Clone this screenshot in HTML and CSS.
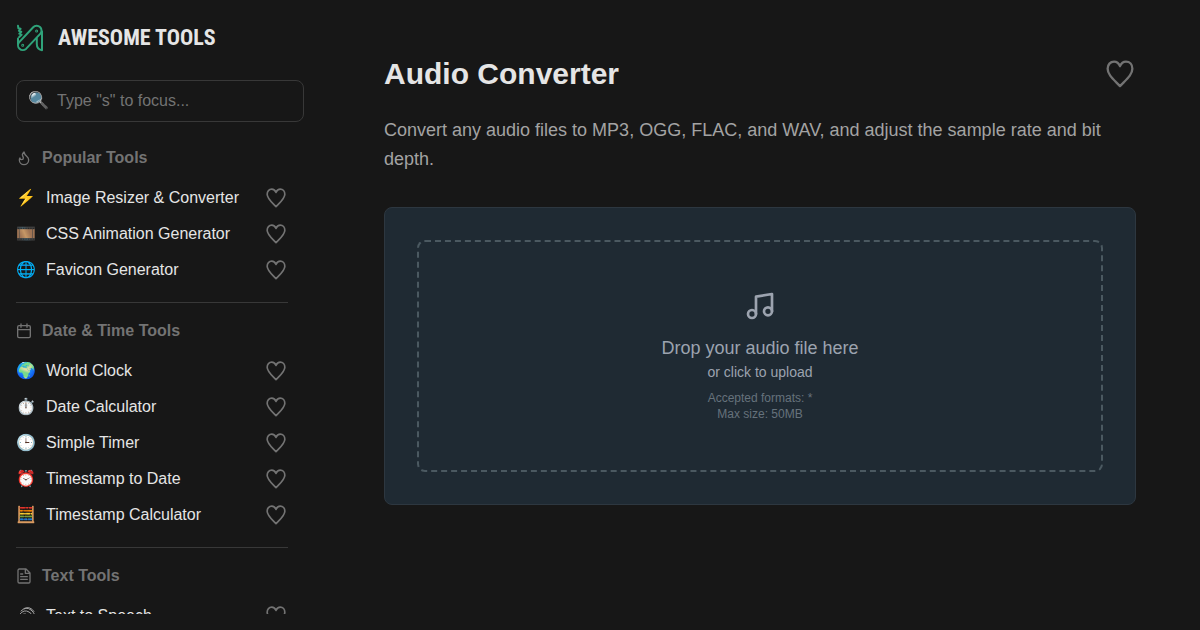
FILE: index.html
```html
<!DOCTYPE html>
<html lang="en">
<head>
    <meta charset="UTF-8">
    <meta name="viewport" content="width=device-width, initial-scale=1.0">
    <title>Audio Converter - Awesome Tools</title>
    <link rel="stylesheet" href="styles.css">
</head>
<body>
    <!-- Shared icons -->
    <svg class="sprite" aria-hidden="true">
        <symbol id="heart" viewBox="0 0 24 24">
            <path d="M12 5.3C10.9 2.6 9.3 1.4 6.9 1.4C3.7 1.4 1.4 3.900 1.400 7.500C1.400 12.600 6.400 16.500 12 22.400C17.600 16.500 22.600 12.600 22.600 7.500C22.600 3.900 20.300 1.400 17.100 1.400C14.700 1.400 13.100 2.600 12 5.300Z"/>
        </symbol>
    </svg>

    <div class="layout">
        <aside class="sidebar">
            <a class="logo" href="index.html">
                <svg class="logo-icon" viewBox="0 0 28 28" aria-hidden="true">
                    <path d="M3 18.4L17.2 3.300a4.800 4.800 0 0 1 7 6.600L10 24.900a4.800 4.800 0 0 1-7-6.500z"/>
                    <path d="M26 7.500v18.800c-3.200-.7-5.200-3.200-5.200-6.300v-5.500"/>
                    <path d="M2 1.800l.4 2.500 2.200.5-1.700 2 2.400.9-2 2 2.300 1-2.400 2.300M2 20v-5.500"/>
                    <circle cx="6.700" cy="21.300" r=".5"/>
                    <circle cx="20.600" cy="6.900" r=".5"/>
                </svg>
                <span class="logo-text">AWESOME TOOLS</span>
            </a>

            <label class="search">
                <span class="search-icon" aria-hidden="true">🔍</span>
                <input type="search" placeholder='Type "s" to focus...' aria-label="Search tools">
            </label>

            <nav class="menu">
                <section class="group">
                    <h2><svg viewBox="0 0 24 24"><path d="M8.5 14.5A2.5 2.5 0 0 0 11 12c0-1.4-.5-2-1-3-1.1-2.1-.2-4 2-6 .5 2.5 2 4.900 4 6.500 2 1.600 3 3.500 3 5.500a7 7 0 1 1-14 0c0-1.200.4-2.300 1-3a2.500 2.500 0 0 0 2.500 2.500z"/></svg>Popular Tools</h2>
                    <ul>
                        <li><a href="#image"><span class="emoji">⚡</span>Image Resizer &amp; Converter</a><button class="fav" aria-label="Favorite Image Resizer"><svg><use href="#heart"/></svg></button></li>
                        <li><a href="#css"><span class="emoji">🎞️</span>CSS Animation Generator</a><button class="fav" aria-label="Favorite CSS Animation Generator"><svg><use href="#heart"/></svg></button></li>
                        <li><a href="#favicon"><span class="emoji">🌐</span>Favicon Generator</a><button class="fav" aria-label="Favorite Favicon Generator"><svg><use href="#heart"/></svg></button></li>
                    </ul>
                </section>
                <section class="group">
                    <h2><svg viewBox="0 0 24 24"><rect x="2.500" y="4" width="19" height="18" rx="2"/><path d="M7.500 1.500v5M16.500 1.500v5M2.500 10h19"/></svg>Date &amp; Time Tools</h2>
                    <ul>
                        <li><a href="#clock"><span class="emoji">🌍</span>World Clock</a><button class="fav" aria-label="Favorite World Clock"><svg><use href="#heart"/></svg></button></li>
                        <li><a href="#date"><span class="emoji">⏱️</span>Date Calculator</a><button class="fav" aria-label="Favorite Date Calculator"><svg><use href="#heart"/></svg></button></li>
                        <li><a href="#timer"><span class="emoji">🕒</span>Simple Timer</a><button class="fav" aria-label="Favorite Simple Timer"><svg><use href="#heart"/></svg></button></li>
                        <li><a href="#timestamp"><span class="emoji">⏰</span>Timestamp to Date</a><button class="fav" aria-label="Favorite Timestamp to Date"><svg><use href="#heart"/></svg></button></li>
                        <li><a href="#timestamp-calc"><span class="emoji">🧮</span>Timestamp Calculator</a><button class="fav" aria-label="Favorite Timestamp Calculator"><svg><use href="#heart"/></svg></button></li>
                    </ul>
                </section>
                <section class="group">
                    <h2><svg viewBox="0 0 24 24"><path d="M15 1.500H5a2 2 0 0 0-2 2v17a2 2 0 0 0 2 2h14a2 2 0 0 0 2-2v-13zM14 2v6h6M7 9h3M7 13h10M7 17h10"/></svg>Text Tools</h2>
                    <ul>
                        <li><a href="#speech"><svg class="speech-icon" viewBox="0 0 20 20" aria-hidden="true"><path d="M5 5q5-5 10-1t4 9M4 8q4-5 9-2t3 7M4 11q4-5 7-2t2 5M8 2.500q6-3 10 3M6 13q2-3 4 0"/></svg>Text to Speech</a><button class="fav" aria-label="Favorite Text to Speech"><svg><use href="#heart"/></svg></button></li>
                    </ul>
                </section>
            </nav>
        </aside>

        <main class="content">
            <header class="title-row">
                <h1>Audio Converter</h1>
                <button class="fav fav-large" aria-label="Favorite Audio Converter"><svg><use href="#heart"/></svg></button>
            </header>
            <p class="description">Convert any audio files to MP3, OGG, FLAC, and WAV, and adjust the sample rate and bit depth.</p>
            <div class="card">
                <button class="dropzone">
                    <svg class="music" viewBox="0 0 24 24" aria-hidden="true"><path d="M9 18V5l12-2v13"/><circle cx="6" cy="18" r="3"/><circle cx="18" cy="16" r="3"/></svg>
                    <span class="drop-title">Drop your audio file here</span>
                    <span class="drop-sub">or click to upload</span>
                    <span class="drop-note">Accepted formats: *<br>Max size: 50MB</span>
                </button>
            </div>
        </main>
    </div>
</body>
</html>
```
FILE: styles.css
```css
* { box-sizing: border-box; margin: 0; padding: 0; }
body { background: #171717; color: #e5e5e5; font-family: "Liberation Sans", Arial, sans-serif; font-size: 16px; line-height: 24px; }
button { background: none; border: none; color: inherit; font: inherit; cursor: pointer; }
a { color: inherit; text-decoration: none; }
ul { list-style: none; }
svg { fill: none; stroke: currentColor; stroke-linecap: round; stroke-linejoin: round; flex-shrink: 0; }
.sprite { display: none; }

.layout { display: flex; height: 100vh; overflow: hidden; }

/* Sidebar */
.sidebar { width: 320px; flex-shrink: 0; padding: 16px; display: flex; flex-direction: column; }
.logo { display: flex; align-items: center; gap: 14px; height: 44px; margin-bottom: 20px; }
.logo-icon { width: 28px; height: 28px; color: #2fa37a; stroke-width: 2; }
.logo-text { font-family: "Roboto Condensed", "Open Sans Condensed", "Liberation Sans Narrow", "Liberation Sans", sans-serif; font-size: 22px; font-weight: bold; white-space: nowrap; }
.search { display: flex; align-items: center; gap: 9px; height: 42px; flex-shrink: 0; padding: 0 11px; border: 1px solid #383838; border-radius: 8px; }
.search-icon { font-size: 17px; width: 20px; }
.search input { flex: 1; min-width: 0; background: none; border: none; outline: none; color: #e5e5e5; font: inherit; }
.search input::placeholder { color: #737373; }

.menu { margin-top: 8px; padding-right: 16px; flex: 1; min-height: 0; overflow: hidden; }
.group { padding: 16px 0 14px; border-bottom: 1px solid #383838; }
.group:last-child { border-bottom: none; }
.group h2 { display: flex; align-items: center; gap: 10px; margin-bottom: 10px; font-size: 16px; line-height: 24px; color: #737373; }
.group h2 svg { width: 16px; height: 16px; stroke-width: 2; }
.group li { display: flex; align-items: center; justify-content: space-between; height: 36px; }
.group li a { display: flex; align-items: center; gap: 10px; }
.emoji { width: 20px; font-size: 16px; }
.speech-icon { width: 20px; height: 20px; color: #a3a3a3; }
.fav { display: flex; padding: 0 2px; color: #737373; }
.fav svg { width: 20px; height: 20px; stroke-width: 2; }

/* Main */
.content { flex: 1; min-width: 0; padding: 54px 64px; }
.title-row { display: flex; align-items: center; justify-content: space-between; }
h1 { font-size: 30px; line-height: 40px; }
.fav-large svg { width: 28px; height: 28px; }
.description { margin-top: 22px; font-size: 18px; line-height: 29px; color: #a3a3a3; }
.card { margin-top: 33px; padding: 32px; background: #1f2a33; border: 1px solid #2d3740; border-radius: 8px; }
.dropzone { display: flex; flex-direction: column; align-items: center; width: 100%; padding: 48px 32px; border: 2px dashed #4b5961; border-radius: 8px; color: #9ca3af; }
.music { width: 32px; height: 32px; stroke-width: 2; }
.drop-title { margin-top: 12px; font-size: 18px; line-height: 28px; }
.drop-sub { font-size: 14px; line-height: 20px; }
.drop-note { margin-top: 8px; font-size: 12px; line-height: 16px; color: #66727c; }
```
